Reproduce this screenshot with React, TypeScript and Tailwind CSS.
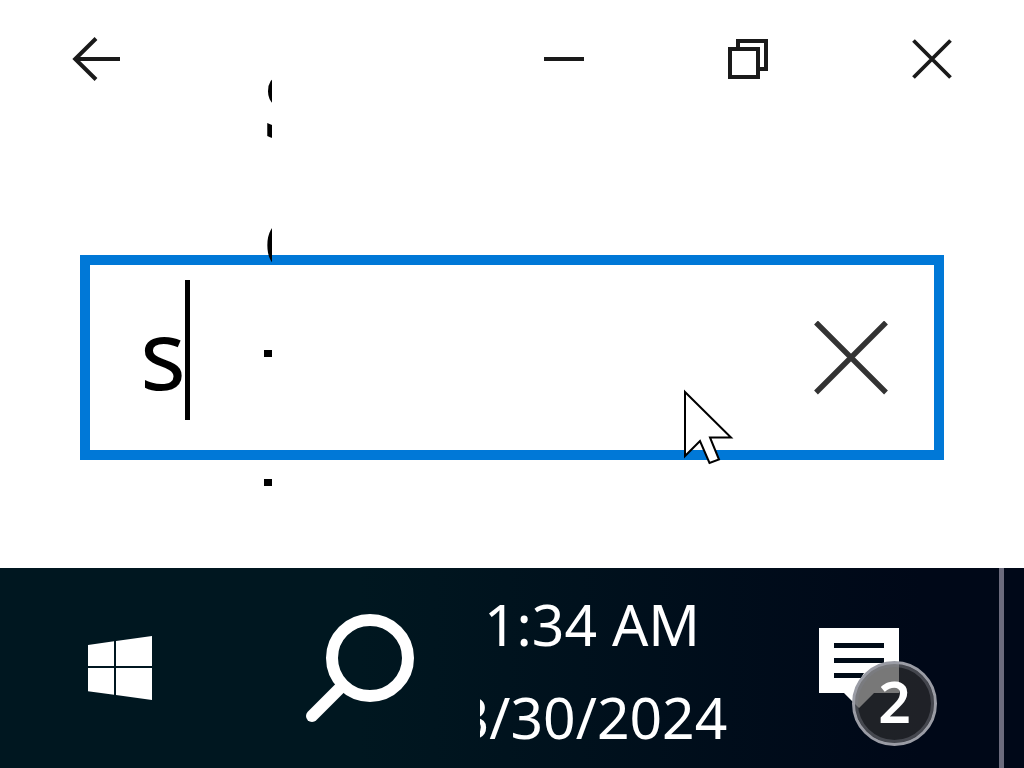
import { useState } from "react";

function TitleBar() {
  return (
    <header className="flex h-[118px] items-center justify-between text-[#1a1a1a]">
      <button aria-label="Back" className="flex h-full w-48 items-center justify-center">
        <svg width="48" height="44" viewBox="0 0 48 44" fill="none" stroke="currentColor" strokeWidth="4">
          <path d="M48 22H3M24 1.5L3.2 22L24 42.5" />
        </svg>
      </button>
      <div className="flex h-full">
        <button aria-label="Minimize" className="flex w-46 items-center justify-center">
          <svg width="40" height="4" viewBox="0 0 40 4" fill="currentColor">
            <path d="M0 0h40v4H0z" />
          </svg>
        </button>
        <button aria-label="Restore" className="flex w-46 items-center justify-center">
          <svg width="40" height="40" viewBox="0 0 40 40" fill="none" stroke="currentColor" strokeWidth="4">
            <path d="M2 10h28v28H2zM10 10V2h28v28h-8" />
          </svg>
        </button>
        <button aria-label="Close" className="flex w-46 items-center justify-center">
          <svg width="40" height="40" viewBox="0 0 40 40" fill="none" stroke="currentColor" strokeWidth="3.8">
            <path d="M1.5 1.5l37 37M38.5 1.5l-37 37" />
          </svg>
        </button>
      </div>
    </header>
  );
}

function SearchBox() {
  const [query, setQuery] = useState("s");

  return (
    <div className="relative mx-20 mt-[137px] mb-[108px] flex h-[205px] border-10 border-[#0078d7]">
      <input
        type="text"
        aria-label="Find a setting"
        value={query}
        onChange={(e) => setQuery(e.target.value)}
        className="min-w-0 flex-1 pb-2.5 pl-[50px] text-[96px] text-black caret-transparent outline-none"
      />
      <button aria-label="Clear" className="flex w-[166px] items-center justify-center text-[#333333]">
        <svg width="74" height="74" viewBox="0 0 74 74" fill="none" stroke="currentColor" strokeWidth="5.4">
          <path d="M2 1.5l70 70M72 1.5L2 71.5" />
        </svg>
      </button>
      <span className="absolute top-[15px] left-[95px] h-[140px] w-[5px] bg-black" />
    </div>
  );
}

// Narrow strip of the page behind, everything past its right edge is cut off
function PageStrip() {
  return (
    <div className="pointer-events-none absolute top-[54px] left-[264px] flex w-2 flex-col overflow-hidden text-[92px] leading-[100px] font-bold text-black">
      <span className="-ml-px">S</span>
      <span className="-ml-px mt-[31px]">c</span>
      <span className="mt-[65px] h-[7px] w-2 bg-black" />
      <span className="mt-[122px] h-[7px] w-2 bg-black" />
    </div>
  );
}

function Pointer() {
  return (
    <svg
      className="pointer-events-none absolute top-[388px] left-[683px]"
      width="52"
      height="78"
      viewBox="0 0 52 78"
      fill="white"
      stroke="black"
      strokeWidth="2"
    >
      <path d="M2 4L48 49.5H27L36 71.5L26.5 75L17 53L2 68Z" />
    </svg>
  );
}

function Taskbar() {
  return (
    <footer className="flex h-[200px] bg-linear-to-r from-[#001720] from-35% to-[#000818] to-90% text-white">
      <button aria-label="Start" className="flex w-60 items-center justify-center">
        <svg width="64" height="64" viewBox="0 0 64 64" fill="currentColor">
          <path d="M0 9L26 5.3V30H0zM28 5L64 0V30H28zM0 32H26V58.7L0 55.3zM28 32H64V64L28 59z" />
        </svg>
      </button>
      <button aria-label="Search" className="flex w-60 items-center justify-center">
        <svg width="108" height="108" viewBox="0 0 108 108" fill="none" stroke="currentColor" strokeWidth="12">
          <circle cx="64" cy="44" r="38" />
          <path d="M36 72L6 102" strokeLinecap="round" />
        </svg>
      </button>
      <button className="flex w-[280px] flex-col items-center justify-center overflow-hidden pt-1.5 pr-14 text-[57px] leading-[93px] whitespace-nowrap">
        <span>1:34 AM</span>
        <span>3/30/2024</span>
      </button>
      <button aria-label="Notifications" className="flex flex-1 items-start pt-[60px] pl-[59px]">
        <span className="relative">
          <svg width="80" height="80" viewBox="0 0 80 80">
            <path d="M0 0H80V65H55L40 80L25 65H0Z" fill="#ffffff" />
            <path d="M15 15h50v5H15zM15 30h50v5H15zM15 45h30l-3 5H15z" fill="#000b17" />
          </svg>
          <span className="absolute top-[33px] left-[33px] flex size-[85px] items-center justify-center rounded-full border-3 border-[#9a9ca5] bg-[#303030]/65 pb-1 text-[57px] leading-none font-semibold inset-ring-3 inset-ring-[#7c7f8a]/40">
            2
          </span>
        </span>
      </button>
      <button aria-label="Show desktop" className="w-[25px] border-l-5 border-[#6b6b7d]" />
    </footer>
  );
}

export default function App() {
  return (
    <div className="relative flex min-h-screen flex-col overflow-hidden bg-white font-['Noto_Sans','Open_Sans',sans-serif]">
      <main className="flex-1">
        <TitleBar />
        <SearchBox />
      </main>
      <PageStrip />
      <Pointer />
      <Taskbar />
    </div>
  );
}
